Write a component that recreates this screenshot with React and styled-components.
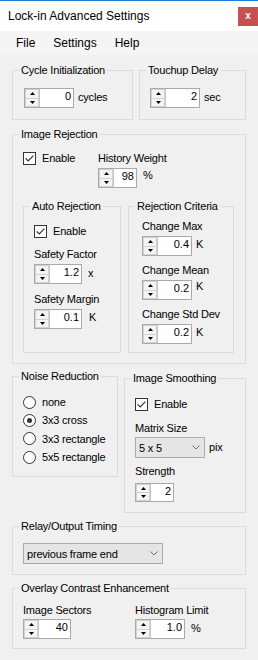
import React from 'react';
import styled, { createGlobalStyle } from 'styled-components';

const GlobalStyle = createGlobalStyle`
  * { box-sizing: border-box; }
  html, body { margin: 0; padding: 0; background: #f0f0f0; }
  body { font-family: "Liberation Sans", Arial, sans-serif; color: #000; }
`;

const Window = styled.div`
  width: 258px;
  height: 660px;
  display: flex;
  flex-direction: column;
  background: #f0f0f0;
  border-top: 1px solid #1c7fd6;
  overflow: hidden;
`;

const TitleBar = styled.div`
  height: 30px;
  flex: none;
  display: flex;
  align-items: center;
  justify-content: space-between;
  padding-left: 8px;
  background: #fff;
`;

const TitleText = styled.span`
  font-size: 12px;
  line-height: 14px;
`;

const CloseButton = styled.div`
  width: 20px;
  height: 19px;
  display: flex;
  align-items: center;
  justify-content: center;
  background: #c75050;
  color: #fff;
  font-size: 10px;
  font-weight: bold;
  line-height: 1;
`;

const MenuBar = styled.nav`
  height: 24px;
  flex: none;
  display: flex;
  padding-left: 7px;
  background: #f5f5f5;
`;

const MenuItem = styled.span`
  padding: 0 9px;
  font-size: 12px;
  line-height: 24px;
`;

const Content = styled.div`
  display: flex;
  flex-direction: column;
  padding: 0 12px;
`;

const Row = styled.div`
  display: flex;
  gap: ${p => p.$gap ?? 6}px;
  margin-top: ${p => p.$mt ?? 0}px;
  align-items: ${p => p.$align || 'stretch'};
`;

const Group = styled.fieldset`
  margin: ${p => p.$mt ?? 0}px 0 0 0;
  padding: 0;
  min-width: 0;
  border: 1px solid #dcdcdc;
  width: ${p => (p.$w ? `${p.$w}px` : 'auto')};
  flex: ${p => (p.$w ? 'none' : '1 1 auto')};
`;

const Legend = styled.legend`
  margin-left: 6px;
  padding: 0 2px;
  font-size: 11px;
  line-height: 13px;
  letter-spacing: -0.2px;
  white-space: nowrap;
`;

const GroupBody = styled.div`
  display: flex;
  flex-direction: ${p => p.$dir || 'column'};
  align-items: flex-start;
  padding: ${p => p.$pad};
`;

const Field = styled.div`
  display: flex;
  flex-direction: column;
  align-items: flex-start;
  margin-top: ${p => p.$mt ?? 0}px;
  width: ${p => (p.$w ? `${p.$w}px` : 'auto')};
  flex: none;
`;

const FieldLabel = styled.div`
  font-size: 11px;
  line-height: 13px;
  letter-spacing: -0.2px;
  white-space: nowrap;
  margin-bottom: ${p => p.$mb ?? 3}px;
`;

const SpinRow = styled.div`
  display: flex;
  align-items: flex-start;
`;

const SpinBox = styled.div`
  display: flex;
  flex: none;
  width: ${p => p.$w}px;
  height: ${p => p.$h ?? 20}px;
  border: 1px solid #a9a9a9;
  background: #fff;
`;

const SpinButtons = styled.div`
  width: 15px;
  flex: none;
  display: flex;
  flex-direction: column;
  border-right: 1px solid #c6c6c6;
  background: #f4f4f4;
`;

const SpinButton = styled.div`
  flex: 1;
  display: flex;
  align-items: center;
  justify-content: center;
  border: 1px solid #d2d2d2;
  border-top-width: ${p => (p.$down ? 0 : 1)}px;
`;

const SpinValue = styled.div`
  flex: 1;
  text-align: right;
  padding-right: 2px;
  font-size: 11px;
  line-height: 15px;
`;

const Unit = styled.span`
  font-size: 11px;
  line-height: 13px;
  letter-spacing: -0.2px;
  white-space: nowrap;
  align-self: flex-start;
  margin-left: ${p => p.$ml ?? 4}px;
  margin-top: ${p => p.$mt ?? 3}px;
`;

const CheckRow = styled.div`
  display: flex;
  align-items: center;
  gap: 6px;
  height: 13px;
  font-size: 11px;
  line-height: 13px;
  letter-spacing: -0.2px;
  width: ${p => (p.$w ? `${p.$w}px` : 'auto')};
  flex: none;
`;

const Box = styled.span`
  width: 13px;
  height: 13px;
  flex: none;
  border: 1px solid #333;
  background: #fff;
  display: flex;
  align-items: center;
  justify-content: center;
`;

const RadioList = styled.div`
  display: flex;
  flex-direction: column;
`;

const RadioRow = styled.div`
  display: flex;
  align-items: center;
  gap: 6px;
  height: 18.33px;
  font-size: 11px;
  letter-spacing: -0.2px;
`;

const RadioCircle = styled.span`
  width: 13px;
  height: 13px;
  flex: none;
  border-radius: 50%;
  border: 1px solid #333;
  background: #fff;
  display: flex;
  align-items: center;
  justify-content: center;
  &::after {
    content: '';
    width: 5px;
    height: 5px;
    border-radius: 50%;
    background: ${p => (p.$on ? '#333' : 'transparent')};
  }
`;

const SelectRow = styled.div`
  display: flex;
  align-items: flex-start;
`;

const Select = styled.div`
  display: flex;
  align-items: center;
  flex: none;
  width: ${p => p.$w}px;
  height: 21px;
  border: 1px solid #acacac;
  background: #e5e5e5;
  padding-left: 3px;
  font-size: 11px;
  letter-spacing: -0.2px;
`;

const SelectText = styled.span`
  flex: 1;
  white-space: nowrap;
`;

const SelectArrow = styled.span`
  width: 17px;
  flex: none;
  display: flex;
  align-items: center;
  justify-content: center;
`;

function Arrow({ down }) {
  return (
    <svg width="5" height="3" viewBox="0 0 5 3">
      <polygon points={down ? '0,0 5,0 2.5,3' : '0,3 5,3 2.5,0'} fill="#000" />
    </svg>
  );
}

function Spinner({ w, h, value, unit, unitTop, unitGap }) {
  return (
    <SpinRow>
      <SpinBox $w={w} $h={h}>
        <SpinButtons>
          <SpinButton>
            <Arrow />
          </SpinButton>
          <SpinButton $down>
            <Arrow down />
          </SpinButton>
        </SpinButtons>
        <SpinValue>{value}</SpinValue>
      </SpinBox>
      {unit && (
        <Unit $mt={unitTop} $ml={unitGap}>
          {unit}
        </Unit>
      )}
    </SpinRow>
  );
}

function Check({ label, w }) {
  return (
    <CheckRow $w={w}>
      <Box>
        <svg width="11" height="11" viewBox="0 0 11 11">
          <path d="M1.6 5.4 L4.2 8 L9.4 2.6" fill="none" stroke="#333" strokeWidth="1.2" />
        </svg>
      </Box>
      {label}
    </CheckRow>
  );
}

function Radio({ label, on }) {
  return (
    <RadioRow>
      <RadioCircle $on={on} />
      {label}
    </RadioRow>
  );
}

function Dropdown({ w, value, unit }) {
  return (
    <SelectRow>
      <Select $w={w}>
        <SelectText>{value}</SelectText>
        <SelectArrow>
          <svg width="8" height="5" viewBox="0 0 8 5">
            <polyline points="0.5,0.5 4,4 7.5,0.5" fill="none" stroke="#707070" strokeWidth="1" />
          </svg>
        </SelectArrow>
      </Select>
      {unit && <Unit $mt={4}>{unit}</Unit>}
    </SelectRow>
  );
}

export default function App() {
  return (
    <>
      <GlobalStyle />
      <Window>
        <TitleBar>
          <TitleText>Lock-in Advanced Settings</TitleText>
          <CloseButton>x</CloseButton>
        </TitleBar>
        <MenuBar>
          <MenuItem>File</MenuItem>
          <MenuItem>Settings</MenuItem>
          <MenuItem>Help</MenuItem>
        </MenuBar>
        <Content>
          <Row $mt={9}>
            <Group $w={121}>
              <Legend>Cycle Initialization</Legend>
              <GroupBody $pad="11px 0 11px 11px">
                <Spinner w={50} value="0" unit="cycles" />
              </GroupBody>
            </Group>
            <Group>
              <Legend>Touchup Delay</Legend>
              <GroupBody $pad="11px 0 11px 10px">
                <Spinner w={50} value="2" unit="sec" />
              </GroupBody>
            </Group>
          </Row>

          <Group $mt={8}>
            <Legend>Image Rejection</Legend>
            <GroupBody $pad="11px 0 10px 10px">
              <Row>
                <Check label="Enable" w={69} />
                <Field>
                  <FieldLabel>History Weight</FieldLabel>
                  <Spinner w={39} value="98" unit="%" unitTop={1} unitGap={6} />
                </Field>
              </Row>
              <Row $gap={7} $mt={12}>
                <Group $w={98}>
                  <Legend>Auto Rejection</Legend>
                  <GroupBody $pad="12px 0 8px 10px">
                    <Check label="Enable" />
                    <Field $mt={10}>
                      <FieldLabel>Safety Factor</FieldLabel>
                      <Spinner w={48} value="1.2" unit="x" unitTop={3} unitGap={6} />
                    </Field>
                    <Field $mt={9}>
                      <FieldLabel>Safety Margin</FieldLabel>
                      <Spinner w={48} value="0.1" unit="K" unitTop={2} unitGap={7} />
                    </Field>
                  </GroupBody>
                </Group>
                <Group $w={106}>
                  <Legend>Rejection Criteria</Legend>
                  <GroupBody $pad="7px 0 8px 13px">
                    <Field>
                      <FieldLabel>Change Max</FieldLabel>
                      <Spinner w={50} value="0.4" unit="K" unitTop={2} />
                    </Field>
                    <Field $mt={8}>
                      <FieldLabel>Change Mean</FieldLabel>
                      <Spinner w={50} value="0.2" unit="K" unitTop={0} />
                    </Field>
                    <Field $mt={8}>
                      <FieldLabel>Change Std Dev</FieldLabel>
                      <Spinner w={50} value="0.2" unit="K" unitTop={2} />
                    </Field>
                  </GroupBody>
                </Group>
              </Row>
            </GroupBody>
          </Group>

          <Row $mt={6} $align="flex-start">
            <Group $w={106}>
              <Legend>Noise Reduction</Legend>
              <GroupBody $pad="10px 0 10px 10px">
                <RadioList>
                  <Radio label="none" />
                  <Radio label="3x3 cross" on />
                  <Radio label="3x3 rectangle" />
                  <Radio label="5x5 rectangle" />
                </RadioList>
              </GroupBody>
            </Group>
            <Group $mt={2}>
              <Legend>Image Smoothing</Legend>
              <GroupBody $pad="13px 0 10px 10px">
                <Check label="Enable" />
                <Field $mt={11}>
                  <FieldLabel $mb={2}>Matrix Size</FieldLabel>
                  <Dropdown w={70} value="5 x 5" unit="pix" />
                </Field>
                <Field $mt={7}>
                  <FieldLabel $mb={5}>Strength</FieldLabel>
                  <Spinner w={39} h={19} value="2" />
                </Field>
              </GroupBody>
            </Group>
          </Row>

          <Group $mt={7}>
            <Legend>Relay/Output Timing</Legend>
            <GroupBody $pad="10px 0 10px 10px">
              <Dropdown w={140} value="previous frame end" />
            </GroupBody>
          </Group>

          <Group $mt={7}>
            <Legend>Overlay Contrast Enhancement</Legend>
            <GroupBody $dir="row" $pad="9px 0 9px 10px">
              <Field $w={112}>
                <FieldLabel $mb={2}>Image Sectors</FieldLabel>
                <Spinner w={48} value="40" />
              </Field>
              <Field>
                <FieldLabel $mb={2}>Histogram Limit</FieldLabel>
                <Spinner w={50} value="1.0" unit="%" unitGap={6} />
              </Field>
            </GroupBody>
          </Group>
        </Content>
      </Window>
    </>
  );
}
